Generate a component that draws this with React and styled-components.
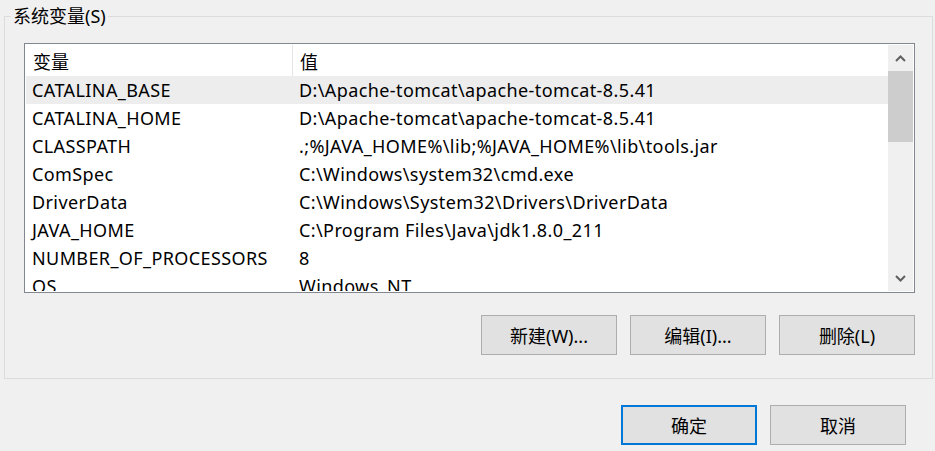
import React from 'react';
import styled, { createGlobalStyle } from 'styled-components';

const GlobalStyle = createGlobalStyle`
  html, body {
    margin: 0;
    padding: 0;
    background: #f0f0f0;
    overflow: hidden;
  }
  body {
    font-family: "Noto Sans", "Noto Sans CJK SC", sans-serif;
    font-size: 18px;
    color: #000;
  }
`;

const variables = [
  { name: 'CATALINA_BASE', value: 'D:\\Apache-tomcat\\apache-tomcat-8.5.41' },
  { name: 'CATALINA_HOME', value: 'D:\\Apache-tomcat\\apache-tomcat-8.5.41' },
  { name: 'CLASSPATH', value: '.;%JAVA_HOME%\\lib;%JAVA_HOME%\\lib\\tools.jar' },
  { name: 'ComSpec', value: 'C:\\Windows\\system32\\cmd.exe' },
  { name: 'DriverData', value: 'C:\\Windows\\System32\\Drivers\\DriverData' },
  { name: 'JAVA_HOME', value: 'C:\\Program Files\\Java\\jdk1.8.0_211' },
  { name: 'NUMBER_OF_PROCESSORS', value: '8' },
  { name: 'OS', value: 'Windows_NT' },
];

const Dialog = styled.div`
  width: 935px;
  height: 451px;
  display: flex;
  flex-direction: column;
`;

const GroupBox = styled.fieldset`
  margin: 4px 2px 0 4px;
  padding: 0;
  min-inline-size: 0;
  border: 1px solid #dcdcdc;
`;

const GroupLabel = styled.legend`
  margin-left: 6px;
  padding: 0 2px;
  line-height: 24px;
  font-size: 18px;
`;

const GroupBody = styled.div`
  padding: 15px 17px 23px 19px;
  display: flex;
  flex-direction: column;
`;

const ListView = styled.div`
  height: 250px;
  box-sizing: border-box;
  border: 1px solid #828790;
  background: #fff;
  padding: 1px;
  display: flex;
  overflow: hidden;
`;

const Table = styled.div`
  flex: 1;
  display: flex;
  flex-direction: column;
  overflow: hidden;
`;

const Row = styled.div`
  display: grid;
  grid-template-columns: 267px 1fr;
  height: ${(p) => (p.$header ? 31 : 28)}px;
  flex-shrink: 0;
  align-items: center;
  background: ${(p) => (p.$selected ? '#ededed' : '#fff')};
  white-space: nowrap;
  letter-spacing: ${(p) => (p.$header ? 0 : 0.4)}px;
`;

const Cell = styled.div`
  padding-left: 6px;
  height: 100%;
  display: flex;
  align-items: center;
  box-sizing: border-box;
`;

const HeaderCell = styled(Cell)`
  padding-left: 7px;
  border-right: ${(p) => (p.$divider ? '1px solid #e5e5e5' : 'none')};
`;

const ScrollBar = styled.div`
  width: 25px;
  background: #f0f0f0;
  display: flex;
  flex-direction: column;
`;

const ArrowButton = styled.div`
  height: 26px;
  display: flex;
  align-items: center;
  justify-content: center;
  flex-shrink: 0;
`;

const Thumb = styled.div`
  height: 71px;
  background: #cdcdcd;
  flex-shrink: 0;
`;

const Track = styled.div`
  flex: 1;
`;

const ButtonRow = styled.div`
  display: flex;
  justify-content: flex-end;
  gap: 13px;
  margin-top: 22px;
`;

const Button = styled.button`
  width: 136px;
  height: 40px;
  box-sizing: border-box;
  background: #e1e1e1;
  border: ${(p) => (p.$default ? '2px solid #0078d7' : '1px solid #adadad')};
  font-family: "Noto Sans", "Noto Sans CJK SC", sans-serif;
  font-size: 18px;
  color: #000;
  padding: 0;
  border-radius: 0;
`;

const DialogButtons = styled(ButtonRow)`
  margin-top: 26px;
  padding-right: 29px;
`;

const Chevron = ({ up }) => (
  <svg width="11" height="7" viewBox="0 0 11 7">
    <polyline
      points={up ? '1,6 5.5,1.5 10,6' : '1,1 5.5,5.5 10,1'}
      fill="none"
      stroke="#606060"
      strokeWidth="2"
    />
  </svg>
);

export default function App() {
  return (
    <Dialog>
      <GlobalStyle />
      <GroupBox>
        <GroupLabel>系统变量(S)</GroupLabel>
        <GroupBody>
          <ListView>
            <Table>
              <Row $header>
                <HeaderCell $divider>变量</HeaderCell>
                <HeaderCell>值</HeaderCell>
              </Row>
              {variables.map((v, i) => (
                <Row key={v.name} $selected={i === 0}>
                  <Cell>{v.name}</Cell>
                  <Cell>{v.value}</Cell>
                </Row>
              ))}
            </Table>
            <ScrollBar>
              <ArrowButton>
                <Chevron up />
              </ArrowButton>
              <Thumb />
              <Track />
              <ArrowButton>
                <Chevron />
              </ArrowButton>
            </ScrollBar>
          </ListView>
          <ButtonRow>
            <Button>新建(W)...</Button>
            <Button>编辑(I)...</Button>
            <Button>删除(L)</Button>
          </ButtonRow>
        </GroupBody>
      </GroupBox>
      <DialogButtons>
        <Button $default>确定</Button>
        <Button>取消</Button>
      </DialogButtons>
    </Dialog>
  );
}
